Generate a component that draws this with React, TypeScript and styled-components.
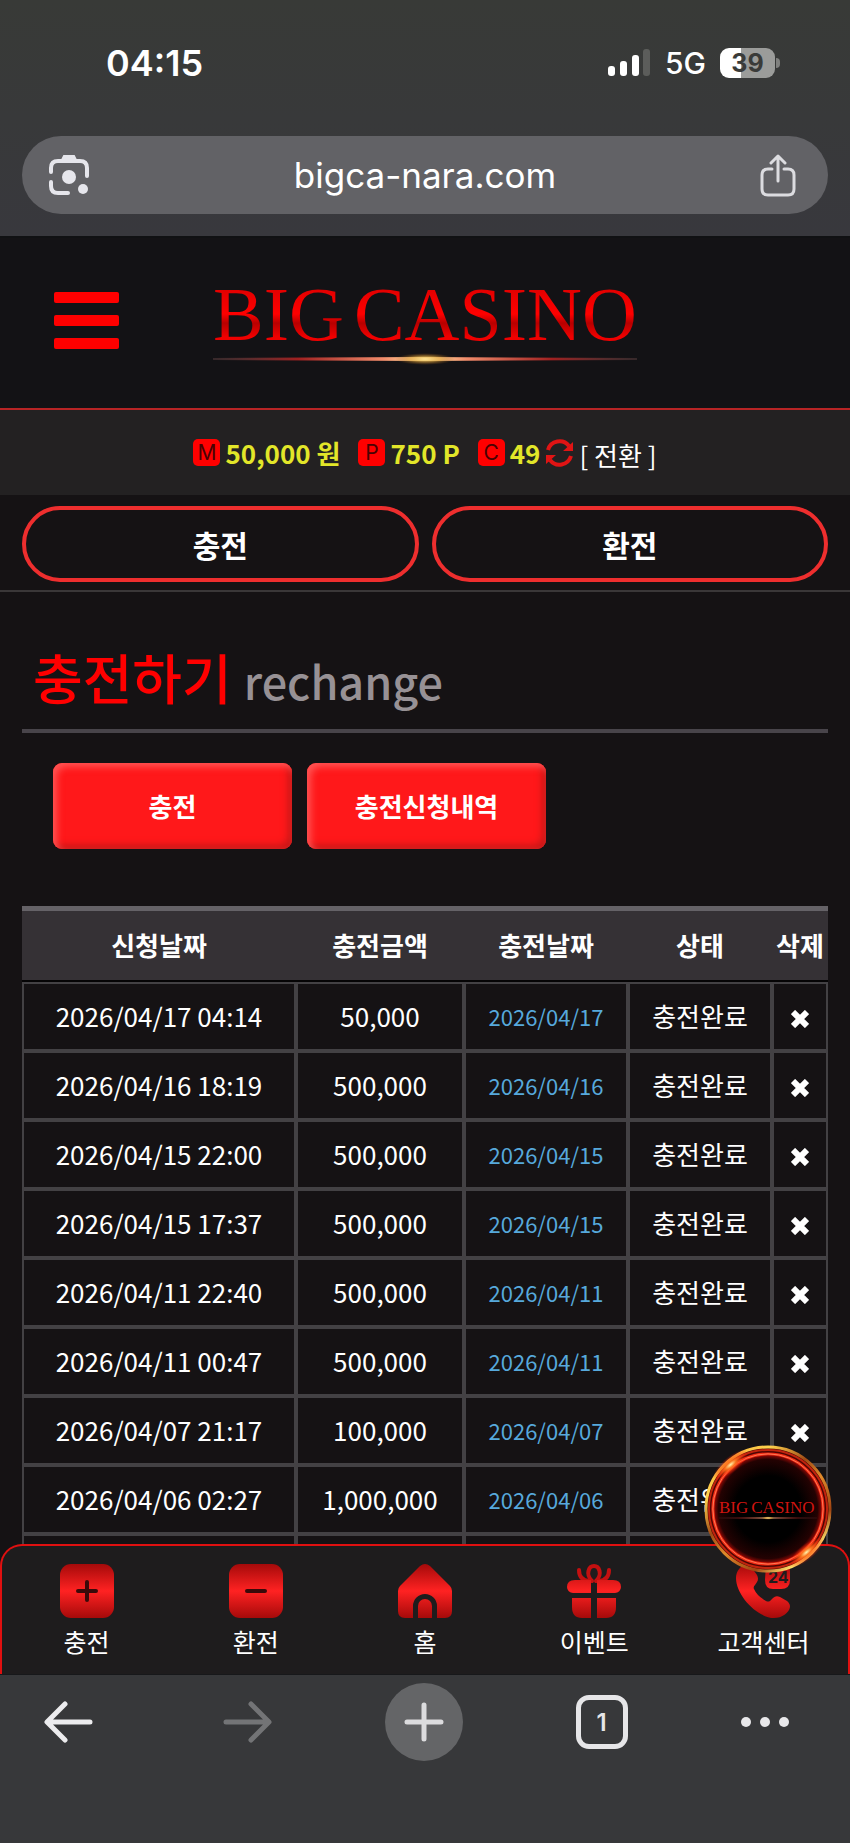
import React from "react";
import styled, { createGlobalStyle } from "styled-components";

const GlobalStyle = createGlobalStyle`
  * {
    box-sizing: border-box;
  }
  body {
    margin: 0;
    background: #151214;
    color: #fff;
    font-family: "Noto Sans CJK KR", sans-serif;
    font-size: 26px;
  }
  button {
    padding: 0;
    border: 0;
    background: none;
    color: inherit;
    font: inherit;
  }
  a {
    color: inherit;
    text-decoration: none;
  }
  svg {
    display: block;
  }
`;

const Screen = styled.div`
  display: flex;
  flex-direction: column;
  height: 100vh;
  overflow: hidden;
`;

/* browser top */

const BrowserTop = styled.div`
  display: flex;
  flex-direction: column;
  gap: 58px;
  padding: 48px 22px 22px;
  background: linear-gradient(#383a37, #38383d);
  border-bottom: 2px solid #101113;
  font-family: Inter, sans-serif;
`;

const StatusBar = styled.div`
  display: flex;
  justify-content: space-between;
  align-items: center;
  height: 30px;
  padding: 0 48px 0 84px;
`;

const Clock = styled.span`
  font-size: 36px;
  font-weight: 600;
`;

const StatusIcons = styled.div`
  display: flex;
  align-items: center;
  gap: 14px;
  font-size: 30px;
  font-weight: 500;
`;

const Battery = styled.div`
  display: flex;
  align-items: center;
  justify-content: center;
  width: 55px;
  height: 30px;
  border-radius: 9px;
  background: linear-gradient(90deg, #fff 39%, #9b9c9a 39%);
  color: #3a3b39;
  font-size: 25px;
  font-weight: 700;
`;

const BatteryTip = styled.div`
  width: 4px;
  height: 10px;
  margin-left: -13px;
  border-radius: 0 4px 4px 0;
  background: #80817f;
`;

const AddressBar = styled.div`
  display: flex;
  align-items: center;
  justify-content: space-between;
  height: 78px;
  padding: 0 30px 0 26px;
  border-radius: 39px;
  background: #626266;
  font-size: 35px;
  line-height: 40px;
`;

/* site */

const Page = styled.main`
  flex: 1;
  min-height: 0;
  overflow: hidden;
`;

const Header = styled.header`
  display: grid;
  grid-template-columns: 1fr auto 1fr;
  align-items: center;
  height: 172px;
  padding: 0 54px 5px;
  border-bottom: 2px solid #b82425;
  background: #131215;
`;

const MenuButton = styled.button`
  display: flex;
  flex-direction: column;
  gap: 12px;
  width: 65px;

  span {
    height: 11px;
    border-radius: 2px;
    background: #f00;
  }
`;

const Logo = styled.a<{ $size: number }>`
  display: flex;
  flex-direction: column;
  font-family: "Liberation Serif", serif;
  font-size: ${(p) => p.$size}px;
  line-height: 1;
`;

const LogoWords = styled.div`
  display: flex;
  gap: 10px;

  span {
    background: linear-gradient(#e00000 15%, #ff0000 50%, #b80000 62%, #f00000 80%);
    background-clip: text;
    color: transparent;
  }
`;

const SmallLogoWords = styled.div`
  display: flex;
  gap: 3px;
  color: #d0140f;
`;

const Wallet = styled.div`
  display: flex;
  align-items: center;
  justify-content: center;
  gap: 18px;
  height: 85px;
  background: #232122;
  line-height: 34px;
`;

const Balance = styled.div`
  display: flex;
  align-items: center;
  gap: 5px;
  color: #e2e629;
  font-weight: 700;
`;

const Tag = styled.span`
  display: flex;
  align-items: center;
  justify-content: center;
  width: 27px;
  height: 27px;
  border-radius: 5px;
  background: #f00;
  color: #480303;
  font-family: Inter, sans-serif;
  font-size: 21px;
  font-weight: 400;
`;

const Convert = styled.button`
  padding-top: 4px;
  color: #fff;
  font-weight: 400;
`;

const MoneyBar = styled.div`
  display: grid;
  grid-template-columns: 1fr 1fr;
  gap: 13px;
  padding: 11px 22px 8px;
  border-bottom: 2px solid #3a3738;
`;

const MoneyButton = styled.button`
  height: 76px;
  border: 4px solid #ee2e2e;
  border-radius: 38px;
  font-size: 30px;
  font-weight: 700;
`;

const Content = styled.section`
  padding: 47px 22px 0;
`;

const Title = styled.h1`
  display: flex;
  align-items: baseline;
  gap: 12px;
  margin: 0;
  padding: 0 11px 10px;
  border-bottom: 4px solid #48444a;
  color: #f00;
  font-size: 54px;
  font-weight: 500;
  line-height: 76px;

  small {
    color: #979195;
    font-size: 45px;
  }
`;

const Tabs = styled.div`
  display: flex;
  gap: 15px;
  padding: 30px 31px 57px;
`;

const TabButton = styled.button`
  width: 239px;
  height: 86px;
  padding-bottom: 2px;
  border-radius: 9px;
  background: #ff181a;
  box-shadow: inset 4px 4px 7px #ff5454, inset -4px -4px 7px #c81818;
  font-weight: 700;
`;

const History = styled.table`
  width: 100%;
  table-layout: fixed;
  border-spacing: 0;
  text-align: center;

  th {
    height: 76px;
    padding: 0 0 2px;
    border-top: 5px solid #656267;
    border-bottom: 2px solid #050405;
    background: #353135;
    font-weight: 700;
  }

  td {
    height: 69px;
    padding: 0 0 2px;
    border: 2px solid #434144;
    line-height: 40px;
  }
`;

const Col = styled.col<{ $width?: number }>`
  width: ${(p) => (p.$width ? `${p.$width}px` : "auto")};
`;

const DoneDate = styled.td`
  color: #57a9dc;
  font-size: 22px;
`;

const DeleteButton = styled.button`
  display: block;
  margin: 6px auto 0;
`;

/* bottom menu */

const BottomNav = styled.nav`
  position: relative;
  display: grid;
  grid-template-columns: repeat(5, 1fr);
  height: 130px;
  margin-top: -26px;
  padding-top: 18px;
  border: 2px solid #e01010;
  border-bottom: 0;
  border-radius: 22px 22px 0 0;
  background: #1e1c1d;
`;

const NavItem = styled.a`
  display: flex;
  flex-direction: column;
  align-items: center;
  gap: 5px;
  line-height: 36px;
  font-size: 25px;
`;

const Badge = styled.div`
  position: absolute;
  top: -101px;
  right: 16px;
  display: grid;
  place-items: center;
  width: 128px;
  height: 128px;

  > * {
    grid-area: 1 / 1;
  }
`;

const BrowserBottom = styled.div`
  display: flex;
  justify-content: space-between;
  height: 169px;
  padding: 8px 60px 0 30px;
  border-top: 1px solid #17181a;
  background: #37383a;
`;

const ToolButton = styled.button<{ $round?: boolean; $narrow?: boolean }>`
  display: grid;
  place-items: center;
  width: ${(p) => (p.$narrow ? 50 : 78)}px;
  height: 78px;
  border-radius: 50%;
  background: ${(p) => (p.$round ? "#646567" : "none")};
`;

const TabCount = styled.span`
  display: grid;
  place-items: center;
  width: 52px;
  height: 54px;
  border: 5px solid #e6e6e8;
  border-radius: 13px;
  color: #e6e6e8;
  font-family: Inter, sans-serif;
  font-size: 24px;
  font-weight: 600;
`;

const balances = [
  { tag: "M", text: "50,000 원" },
  { tag: "P", text: "750 P" },
  { tag: "C", text: "49" },
];

const rows = [
  { asked: "2026/04/17 04:14", amount: "50,000", done: "2026/04/17" },
  { asked: "2026/04/16 18:19", amount: "500,000", done: "2026/04/16" },
  { asked: "2026/04/15 22:00", amount: "500,000", done: "2026/04/15" },
  { asked: "2026/04/15 17:37", amount: "500,000", done: "2026/04/15" },
  { asked: "2026/04/11 22:40", amount: "500,000", done: "2026/04/11" },
  { asked: "2026/04/11 00:47", amount: "500,000", done: "2026/04/11" },
  { asked: "2026/04/07 21:17", amount: "100,000", done: "2026/04/07" },
  { asked: "2026/04/06 02:27", amount: "1,000,000", done: "2026/04/06" },
];

const NavIcon = ({ children }: { children: React.ReactNode }) => (
  <svg width="54" height="54" viewBox="0 0 54 54" fill="url(#navRed)" strokeLinecap="round">
    {children}
  </svg>
);

const navItems = [
  {
    label: "충전",
    icon: (
      <NavIcon>
        <rect width="54" height="54" rx="11" />
        <path d="M27 18v18M18 27h18" stroke="#3a0a0a" strokeWidth="4" />
      </NavIcon>
    ),
  },
  {
    label: "환전",
    icon: (
      <NavIcon>
        <rect width="54" height="54" rx="11" />
        <path d="M18 27h18" stroke="#3a0a0a" strokeWidth="4" />
      </NavIcon>
    ),
  },
  {
    label: "홈",
    icon: (
      <NavIcon>
        <path d="M22 2q5-4 10 0L52 22q2 2 2 5v20q0 7-7 7H39V42a12 12 0 0 0-24 0V54H7q-7 0-7-7V27q0-3 2-5Z" />
        <path d="M20 54V42a7 7 0 0 1 14 0V54Z" />
      </NavIcon>
    ),
  },
  {
    label: "이벤트",
    icon: (
      <NavIcon>
        <g fill="none" stroke="#c41010" strokeWidth="4">
          <path d="M25 17C18 10 22 2 27 2s9 8 2 15" />
          <path d="M22 17q-10-1-10-11M32 17q10-1 10-11" />
        </g>
        <path d="M8 16h16v13H6a6 6 0 0 1-6-6q0-7 8-7ZM30 16h16q8 0 8 7a6 6 0 0 1-6 6H30Z" />
        <path d="M5 34h19v20H15Q5 54 5 43ZM30 34h19v9q0 11-10 11h-9Z" />
      </NavIcon>
    ),
  },
  {
    label: "고객센터",
    icon: (
      <NavIcon>
        <path d="M10 1C5 1 0 7 0 14c0 18 22 40 38 40 8 0 15-5 16-11 0-3-1-4-3-6l-7-4q-4-2-7 1l-3 3q-2 1-4 0-9-5-12-12-1-2 1-4l2-3q2-3 0-7L16 4q-2-3-6-3Z" />
        <path d="M30 0h16q8 0 8 8v8q0 9-9 9h-8q-8 0-8-9Z" />
        <text x="32" y="19" fontFamily="Inter, sans-serif" fontSize="16" fontWeight="700" fill="#1e1c1d">
          24
        </text>
      </NavIcon>
    ),
  },
];

const GlowLine = ({ width, height }: { width: number; height: number }) => (
  <svg width={width} height={height} viewBox="0 0 424 14" preserveAspectRatio="none">
    <defs>
      <linearGradient id="glow">
        <stop offset="0" stopColor="#6b4a4a" stopOpacity="0.4" />
        <stop offset="0.2" stopColor="#a02020" />
        <stop offset="0.4" stopColor="#f08a6a" />
        <stop offset="0.5" stopColor="#ffe9a0" />
        <stop offset="0.6" stopColor="#f08a6a" />
        <stop offset="0.8" stopColor="#a02020" />
        <stop offset="1" stopColor="#6b4a4a" stopOpacity="0.4" />
      </linearGradient>
      <radialGradient id="spark">
        <stop offset="0" stopColor="#ffe79a" />
        <stop offset="0.5" stopColor="#e0a63c" stopOpacity="0.6" />
        <stop offset="1" stopColor="#8a4a10" stopOpacity="0" />
      </radialGradient>
    </defs>
    <path d="M0 6 212 5 424 6V8L212 9 0 8Z" fill="url(#glow)" />
    <ellipse cx="212" cy="7" rx="30" ry="6" fill="url(#spark)" />
  </svg>
);

const BadgeRing = () => (
  <svg width="128" height="128" viewBox="0 0 130 130" fill="none">
    <defs>
      <linearGradient id="gold" x1="0.1" y1="0" x2="0.9" y2="1">
        <stop offset="0" stopColor="#f2a534" />
        <stop offset="0.2" stopColor="#ffd34d" />
        <stop offset="0.4" stopColor="#a04a14" />
        <stop offset="0.55" stopColor="#e08a2a" />
        <stop offset="0.75" stopColor="#a04412" />
        <stop offset="0.88" stopColor="#ffe06a" />
        <stop offset="1" stopColor="#b8621c" />
      </linearGradient>
      <radialGradient id="core">
        <stop offset="0.6" stopColor="#000" />
        <stop offset="0.9" stopColor="#240202" />
        <stop offset="1" stopColor="#a80a06" />
      </radialGradient>
      <radialGradient id="flare">
        <stop offset="0" stopColor="#fff6b0" />
        <stop offset="0.3" stopColor="#ff7a20" stopOpacity="0.95" />
        <stop offset="1" stopColor="#ff1000" stopOpacity="0" />
      </radialGradient>
    </defs>
    <circle cx="65" cy="65" r="63" fill="#4c0604" stroke="url(#gold)" strokeWidth="3" />
    <circle cx="65" cy="65" r="60" stroke="#c0240e" strokeWidth="2" />
    <circle cx="65" cy="65" r="56" fill="url(#core)" stroke="#f02a14" strokeWidth="3" />
    <circle cx="65" cy="65" r="56" stroke="#ff7a54" strokeWidth="1" />
    <ellipse cx="27" cy="20" rx="22" ry="8" fill="url(#flare)" transform="rotate(-40 27 20)" />
    <ellipse cx="104" cy="109" rx="22" ry="8" fill="url(#flare)" transform="rotate(-40 104 109)" />
  </svg>
);

export default function App() {
  return (
    <Screen>
      <GlobalStyle />
      <svg width="0" height="0" style={{ position: "absolute" }}>
        <linearGradient id="navRed" gradientUnits="userSpaceOnUse" x1="0" y1="0" x2="0" y2="54">
          <stop offset="0" stopColor="#a50a0a" />
          <stop offset="0.5" stopColor="#ff2222" />
          <stop offset="1" stopColor="#a50a0a" />
        </linearGradient>
      </svg>

      <BrowserTop>
        <StatusBar>
          <Clock>04:15</Clock>
          <StatusIcons>
            <svg width="43" height="28" viewBox="0 0 43 28" fill="#fff">
              <rect y="17" width="7" height="10" rx="3" />
              <rect x="12" y="12" width="7" height="15" rx="3" />
              <rect x="24" y="6" width="7" height="21" rx="3" />
              <rect x="35" width="7" height="27" rx="3" fill="#5c5d5b" />
            </svg>
            5G
            <Battery>39</Battery>
            <BatteryTip />
          </StatusIcons>
        </StatusBar>
        <AddressBar>
          <button aria-label="Lens">
            <svg width="42" height="42" viewBox="0 0 42 42" fill="none" stroke="#e6e6ec" strokeWidth="4" strokeLinecap="round">
              <path d="M3 18V14Q3 7 10 7H32Q39 7 39 14V22M3 28v4q0 7 7 7h10" />
              <path d="M14 6 16 2h10l2 4Z" fill="#e6e6ec" strokeWidth="2" />
              <circle cx="21" cy="23" r="7" fill="#e6e6ec" stroke="none" />
              <circle cx="35" cy="35" r="5" fill="#e6e6ec" stroke="none" />
            </svg>
          </button>
          <span>bigca-nara.com</span>
          <button aria-label="Share">
            <svg width="38" height="44" viewBox="0 0 38 44" fill="none" stroke="#dcdce0" strokeWidth="3" strokeLinecap="round" strokeLinejoin="round">
              <path d="M12 16H8q-6 0-6 6V36q0 6 6 6H28q6 0 6-6V22q0-6-6-6H24M18 28V3M11 10l7-7 7 7" />
            </svg>
          </button>
        </AddressBar>
      </BrowserTop>

      <Page>
        <Header>
          <MenuButton aria-label="Menu">
            <span />
            <span />
            <span />
          </MenuButton>
          <Logo href="#" $size={76}>
            <LogoWords>
              <span>BIG</span>
              <span>CASINO</span>
            </LogoWords>
            <GlowLine width={424} height={14} />
          </Logo>
        </Header>

        <Wallet>
          {balances.map((b) => (
            <Balance key={b.tag}>
              <Tag>{b.tag}</Tag>
              {b.text}
              {b.tag === "C" && (
                <>
                  <svg width="29" height="28" viewBox="0 0 29 28" fill="none" stroke="#e01414" strokeWidth="4">
                    <path d="M3 11A12 12 0 0 1 24 7M26 17A12 12 0 0 1 5 21" />
                    <path d="M28 3v9H18ZM1 25V16H11Z" fill="#e01414" stroke="none" />
                  </svg>
                  <Convert>[ 전환 ]</Convert>
                </>
              )}
            </Balance>
          ))}
        </Wallet>

        <MoneyBar>
          <MoneyButton>충전</MoneyButton>
          <MoneyButton>환전</MoneyButton>
        </MoneyBar>

        <Content>
          <Title>
            충전하기 <small>rechange</small>
          </Title>
          <Tabs>
            <TabButton>충전</TabButton>
            <TabButton>충전신청내역</TabButton>
          </Tabs>
          <History>
            <colgroup>
              <Col />
              <Col $width={168} />
              <Col $width={164} />
              <Col $width={144} />
              <Col $width={56} />
            </colgroup>
            <thead>
              <tr>
                <th>신청날짜</th>
                <th>충전금액</th>
                <th>충전날짜</th>
                <th>상태</th>
                <th>삭제</th>
              </tr>
            </thead>
            <tbody>
              {rows.map((row) => (
                <tr key={row.asked}>
                  <td>{row.asked}</td>
                  <td>{row.amount}</td>
                  <DoneDate>{row.done}</DoneDate>
                  <td>충전완료</td>
                  <td>
                    <DeleteButton aria-label="삭제">
                      <svg width="18" height="18" viewBox="0 0 18 18" stroke="#fff" strokeWidth="6" strokeLinejoin="round">
                        <path d="M2 2 16 16M16 2 2 16" />
                      </svg>
                    </DeleteButton>
                  </td>
                </tr>
              ))}
              <tr>
                <td />
                <td />
                <td />
                <td />
                <td />
              </tr>
            </tbody>
          </History>
        </Content>
      </Page>

      <BottomNav>
        {navItems.map((item) => (
          <NavItem href="#" key={item.label}>
            {item.icon}
            {item.label}
          </NavItem>
        ))}
        <Badge>
          <BadgeRing />
          <Logo href="#" $size={17}>
            <SmallLogoWords>
              <span>BIG</span>
              <span>CASINO</span>
            </SmallLogoWords>
            <GlowLine width={98} height={4} />
          </Logo>
        </Badge>
      </BottomNav>

      <BrowserBottom>
        <ToolButton aria-label="Back">
          <svg width="50" height="42" viewBox="0 0 50 42" fill="none" stroke="#ececee" strokeWidth="5" strokeLinecap="round" strokeLinejoin="round">
            <path d="M46 21H4M21 3 3 21 21 39" />
          </svg>
        </ToolButton>
        <ToolButton aria-label="Forward">
          <svg width="50" height="42" viewBox="0 0 50 42" fill="none" stroke="#737476" strokeWidth="5" strokeLinecap="round" strokeLinejoin="round">
            <path d="M4 21H46M29 3 47 21 29 39" />
          </svg>
        </ToolButton>
        <ToolButton $round aria-label="New tab">
          <svg width="40" height="40" viewBox="0 0 40 40" stroke="#dcdcde" strokeWidth="5" strokeLinecap="round">
            <path d="M20 3v34M3 20h34" />
          </svg>
        </ToolButton>
        <ToolButton aria-label="Tabs">
          <TabCount>1</TabCount>
        </ToolButton>
        <ToolButton $narrow aria-label="More">
          <svg width="50" height="12" viewBox="0 0 50 12" fill="#e8e8ea">
            <circle cx="6" cy="6" r="5" />
            <circle cx="25" cy="6" r="5" />
            <circle cx="44" cy="6" r="5" />
          </svg>
        </ToolButton>
      </BrowserBottom>
    </Screen>
  );
}
